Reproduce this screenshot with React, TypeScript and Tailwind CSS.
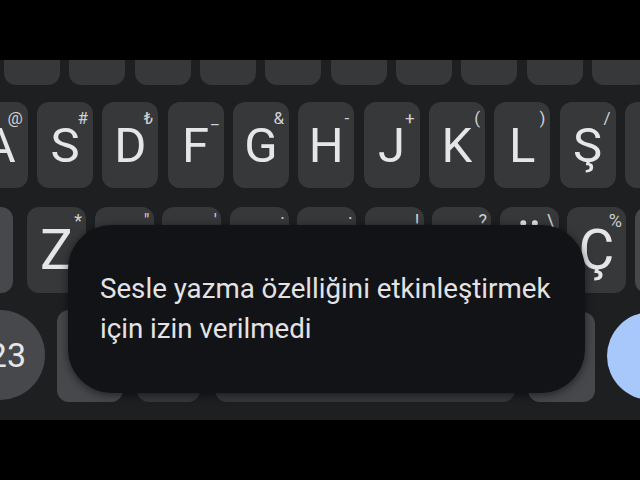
const topRow = Array.from({ length: 10 });

const homeRow: [string, string][] = [
  ["A", "@"],
  ["S", "#"],
  ["D", "₺"],
  ["F", "_"],
  ["G", "&"],
  ["H", "-"],
  ["J", "+"],
  ["K", "("],
  ["L", ")"],
  ["Ş", "/"],
  ["İ", "'"],
];

const lowerRow: [string, string][] = [
  ["Z", "*"],
  ["X", '"'],
  ["C", "'"],
  ["V", ":"],
  ["B", ";"],
  ["N", "!"],
  ["M", "?"],
  ["Ö", "\\"],
  ["Ç", "%"],
];

function LetterKey({ label, hint, big }: { label: string; hint: string; big?: boolean }) {
  return (
    <div
      className={
        big
          ? "relative flex h-[86px] w-[59px] shrink-0 items-center justify-center rounded-[12px] bg-[#37383a]"
          : "relative flex h-[86px] w-[56px] shrink-0 items-center justify-center rounded-[12px] bg-[#37383a]"
      }
    >
      <span
        className={
          big
            ? "absolute right-[4px] top-[3px] text-[18px] leading-[22px] text-[#d0d0d2]"
            : "absolute right-[5px] top-[5px] text-[17px] leading-[22px] text-[#d0d0d2]"
        }
      >
        {hint}
      </span>
      <span className={big ? "text-[55px] leading-none text-[#e6e6e8]" : "text-[49px] leading-none text-[#e6e6e8]"}>
        {label}
      </span>
    </div>
  );
}

export default function App() {
  return (
    <div className="relative flex h-[480px] w-[640px] flex-col overflow-hidden bg-black font-['Roboto','Noto_Sans',sans-serif]">
      <div className="h-[60px] shrink-0" />

      <div className="flex h-[360px] shrink-0 flex-col bg-[#1e1f21]">
        {/* top row, cut by the black band */}
        <div className="flex h-[25px] gap-[9.33px] pl-[4px]">
          {topRow.map((_, i) => (
            <div key={i} className="h-[25px] w-[56px] shrink-0 rounded-b-[12px] bg-[#37383a]" />
          ))}
        </div>

        {/* home row */}
        <div className="ml-[-28.33px] mt-[17px] flex gap-[9.33px]">
          {homeRow.map(([l, h]) => (
            <LetterKey key={l} label={l} hint={h} />
          ))}
        </div>

        {/* lower row */}
        <div className="ml-[-46px] mt-[19px] flex gap-[8.5px]">
          <div className="mr-[5.5px] h-[86px] w-[59px] shrink-0 rounded-[12px] bg-[#47484b]" />
          {lowerRow.map(([l, h]) => (
            <LetterKey key={l} label={l} hint={h} big />
          ))}
          <div className="h-[86px] w-[59px] shrink-0 rounded-[12px] bg-[#47484b]" />
        </div>

        {/* bottom row */}
        <div className="ml-[-45px] mt-[17px] flex items-start">
          <div className="flex h-[90px] w-[90px] shrink-0 items-center justify-end whitespace-nowrap rounded-full bg-[#47484b] pr-[19px] text-[34px] leading-none text-[#e6e6e8]">
            ?123
          </div>
          <div className="ml-[12px] h-[92px] w-[66px] shrink-0 rounded-[12px] bg-[#47484b]" />
          <div className="ml-[14px] h-[92px] w-[63px] shrink-0 rounded-[12px] bg-[#37383a]" />
          <div className="ml-[15px] h-[92px] w-[300px] shrink-0 rounded-[12px] bg-[#37383a]" />
          <div className="ml-[13px] mt-[2px] h-[90px] w-[67px] shrink-0 rounded-[12px] bg-[#47484b]" />
          <div className="ml-[12px] mt-[2px] h-[88px] w-[88px] shrink-0 rounded-full bg-[#a8c7fa]" />
        </div>
      </div>

      {/* toast */}
      <div className="absolute left-[68px] top-[225px] flex h-[168px] w-[517px] items-center rounded-[44px] bg-[#121317] pl-[32px] pr-[20px] shadow-[0_2px_10px_rgba(0,0,0,0.55)]">
        <p className="text-[27.7px] leading-[40px] text-[#e3e3e6]">
          Sesle yazma özelliğini etkinleştirmek için izin verilmedi
        </p>
      </div>
    </div>
  );
}
